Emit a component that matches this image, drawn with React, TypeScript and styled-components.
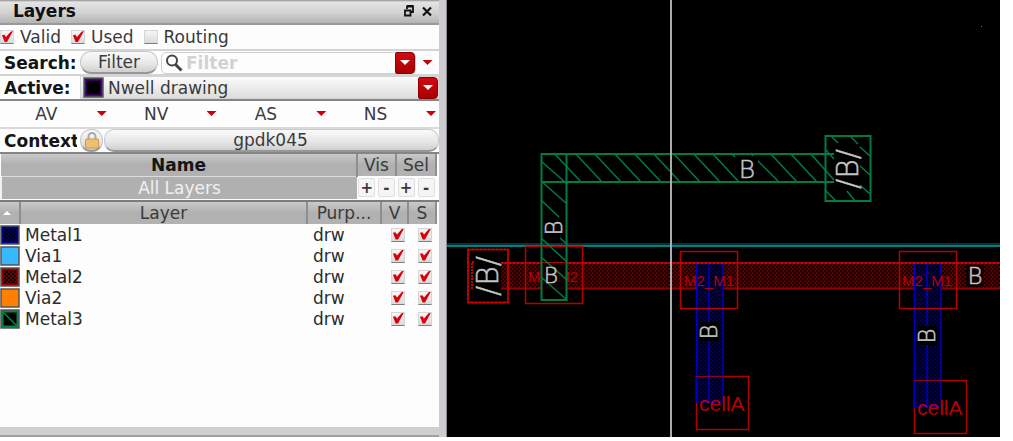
import React from 'react';
import styled, { createGlobalStyle, css } from 'styled-components';

const GlobalStyle = createGlobalStyle`
  * { box-sizing: border-box; }
  body {
    margin: 0;
    background: #fff;
    font-family: "DejaVu Sans", sans-serif;
    font-size: 17px;
    line-height: 20px;
    color: #3a3a3a;
  }
  button, input, select { font: inherit; color: inherit; margin: 0; }
`;

const Window = styled.div`
  display: grid;
  grid-template-columns: minmax(0, 439fr) 8px minmax(0, 553fr);
  padding-right: 13px;
`;

const Panel = styled.section`
  display: flex;
  flex-direction: column;
  min-width: 0;
  background: #fdfdfd;
`;

const Splitter = styled.div`
  background: #cdcdd1;
  border-right: 1px solid #8c8c90;
`;

const TitleBar = styled.header`
  display: flex;
  align-items: center;
  height: 25px;
  padding: 0 3px 2px 13px;
  background: linear-gradient(#8f8f8f 0, #e4e4e4 2px, #d2d2d2 55%, #b4b4b4 100%);
  border-bottom: 2px solid #999;
`;

const Title = styled.h1`
  flex: 1;
  margin: 0;
  font-size: 17px;
  line-height: 20px;
  color: #111;
`;

const TitleButton = styled.button`
  display: flex;
  width: 18px;
  padding: 2px;
  border: 0;
  background: none;
  color: #111;
`;

const Row = styled.div<{ $height: number; $dark?: boolean }>`
  display: flex;
  align-items: center;
  height: ${(p) => p.$height}px;
  border-bottom: 2px solid ${(p) => (p.$dark ? '#858585' : '#d4d4d4')};
`;

const CheckLabel = styled.label`
  display: flex;
  align-items: center;
  gap: 6px;
  margin-right: 10px;
`;

const CheckBox = styled.input.attrs({ type: 'checkbox' })`
  appearance: none;
  display: block;
  flex: none;
  width: 14px;
  height: 14px;
  background: linear-gradient(#f6f6f6, #dadada);
  border: 1px solid #d6d6d6;
  border-bottom-color: #7c7c7c;
  &:checked::after {
    content: '';
    display: block;
    width: 12px;
    height: 11px;
    background: #d8000c;
    clip-path: polygon(8% 38%, 28% 34%, 42% 54%, 80% 6%, 100% 0, 50% 100%, 30% 100%);
  }
`;

const RowLabel = styled.label`
  flex: none;
  width: 77px;
  padding-left: 4px;
  overflow: hidden;
  white-space: nowrap;
  font-weight: bold;
  color: #151515;
`;

const pill = css`
  border: 1px solid #c9c9c9;
  border-bottom: 2px solid #979797;
  background: linear-gradient(#fafafa, #e6e6e6 60%, #cfcfcf);
  padding: 0;
`;

const FilterButton = styled.button`
  ${pill}
  flex: none;
  width: 78px;
  height: 23px;
  margin-left: 3px;
  border-radius: 11px;
  line-height: 20px;
`;

const SearchField = styled.div`
  display: flex;
  align-items: center;
  flex: 1;
  min-width: 0;
  height: 22px;
  margin-left: 3px;
  padding-left: 2px;
  border: 1px solid #d0d0d0;
  border-radius: 5px;
`;

const SearchInput = styled.input`
  flex: 1;
  min-width: 0;
  padding: 0 0 0 2px;
  border: 0;
  outline: 0;
  background: transparent;
  height: 20px;
  &::placeholder { color: #d2d2d2; font-weight: bold; opacity: 1; }
`;

const DropButton = styled.button`
  display: flex;
  align-items: center;
  justify-content: center;
  flex: none;
  width: 20px;
  height: 22px;
  padding: 0;
  border: 1px solid #8c0000;
  border-radius: 2px 4px 4px 2px;
  background: linear-gradient(#d20a10, #a80006);
`;

const Arrow = styled.span<{ $light?: boolean }>`
  width: 10px;
  height: 5px;
  background: ${(p) => (p.$light ? '#fff' : '#c8000a')};
  clip-path: polygon(0 0, 100% 0, 50% 100%);
`;

const MenuButton = styled.button`
  display: flex;
  align-items: center;
  justify-content: center;
  flex: none;
  width: 23px;
  height: 20px;
  padding: 0;
  border: 0;
  background: none;
`;

const Combo = styled.div`
  display: flex;
  align-items: center;
  flex: 1;
  min-width: 0;
  height: 23px;
  margin-left: 3px;
  padding-left: 2px;
  border: 1px solid #d5d5d5;
  background: linear-gradient(#fbfbfb, #e9e9e9 60%, #dcdcdc);
`;

const ComboSelect = styled.select`
  appearance: none;
  flex: 1;
  min-width: 0;
  height: 21px;
  padding: 0 0 0 4px;
  border: 0;
  outline: 0;
  background: transparent;
`;

const Modes = styled.div`
  display: grid;
  grid-template-columns: repeat(4, 1fr);
  height: 28px;
  border-bottom: 2px solid #dadada;
`;

const ModeButton = styled.button`
  display: flex;
  align-items: center;
  padding: 0 3px 1px 0;
  border: 0;
  background: none;
  span:first-child { flex: 1; padding-right: 4px; }
`;

const LockButton = styled.button`
  ${pill}
  display: flex;
  align-items: center;
  justify-content: center;
  flex: none;
  width: 23px;
  height: 23px;
  margin-left: 3px;
  border-radius: 11px;
`;

const ContextButton = styled.button`
  ${pill}
  flex: 1;
  min-width: 0;
  height: 23px;
  margin-left: 1px;
  padding-right: 2px;
  border-radius: 10px;
`;

const Table = styled.table`
  width: calc(100% - 2px);
  table-layout: fixed;
  border-collapse: collapse;
  td, th { padding: 0; }
`;

const HeadCell = styled.th<{ $width?: number; $bold?: boolean }>`
  width: ${(p) => (p.$width ? `${p.$width}px` : 'auto')};
  height: 22px;
  font-weight: ${(p) => (p.$bold ? 'bold' : 'normal')};
  color: ${(p) => (p.$bold ? '#151515' : '#3a3a3a')};
  background: linear-gradient(#c9c9c9, #b0b0b0 50%, #b2b2b2);
  border-right: 2px solid #8e8e8e;
  white-space: nowrap;
  line-height: 20px;
`;

const AllCell = styled.td`
  height: 23px;
  background: #b0b0b0;
  border-left: 2px solid #f2f2f2;
  border-top: 1px solid #dcdcdc;
  color: #f1f1f1;
  text-align: center;
`;

const Steppers = styled.div`
  display: flex;
  justify-content: space-around;
`;

const StepButton = styled.button`
  width: 17px;
  height: 19px;
  padding: 0;
  border: 1px solid #e0e0e0;
  border-radius: 2px;
  background: #f5f5f5;
  font-weight: bold;
  font-size: 15px;
  line-height: 16px;
`;

const Divider = styled.div`
  height: 3px;
  border-top: 1px solid #fdfdfd;
  border-bottom: 2px solid #7c7c7c;
`;

const LayerRow = styled.tr`
  height: 21px;
  color: #2c2c2c;
`;

const Purpose = styled.td`
  && { padding-left: 6px; }
`;

const LayerName = styled.td`
  && { padding-left: 5px; }
`;

const CheckCell = styled.td`
  && { padding-left: 10px; }
`;

const SwatchSvg = styled.svg`
  display: block;
  flex: none;
`;

const StatusEdge = styled.footer`
  height: 10px;
  margin-top: auto;
  background: #cfcfcf;
  border-bottom: 2px solid #a0a0a0;
`;

const Layout = styled.svg`
  display: block;
  width: 100%;
  height: auto;
  background: #000;
`;

const WireText = styled.text`
  font-family: "DejaVu Sans Light", "DejaVu Sans", sans-serif;
  font-weight: 200;
  fill: #c4c4c4;
  stroke: #c4c4c4;
  stroke-width: 0.5px;
  text-anchor: middle;
`;

const CellText = styled.text`
  font-family: "Liberation Sans", sans-serif;
  fill: #b40008;
`;

type SwatchKind = 'nwell' | 'metal1' | 'via1' | 'metal2' | 'via2' | 'metal3';

const swatchColors: Record<SwatchKind, [string, string]> = {
  nwell: ['#4b0082', '#000'],
  metal1: ['#00008f', 'url(#sw-metal1)'],
  via1: ['#38b8ff', '#38b8ff'],
  metal2: ['#980000', 'url(#sw-metal2)'],
  via2: ['#ff8000', '#ff8000'],
  metal3: ['#00854a', '#000'],
};

function Swatch({ kind, size }: { kind: SwatchKind; size: number }) {
  const [edge, fill] = swatchColors[kind];
  return (
    <SwatchSvg width={size} height={size} viewBox="0 0 20 20" aria-hidden="true">
      <defs>
        <pattern id={`sw-${kind}`} width="4" height="4" patternUnits="userSpaceOnUse">
          <rect width="4" height="4" fill="#000" />
          <path d="M0 0h2v2h2v2h-2v-2h-2z" fill={edge} opacity="0.7" />
        </pattern>
      </defs>
      <rect x="1" y="1" width="18" height="18" fill={edge} stroke="#555" strokeWidth="1.500" />
      <rect x="3.500" y="3.500" width="13" height="13" fill={fill} />
      {kind === 'metal3' && <path d="M3 3L17 17" stroke="#00854a" strokeWidth="1.500" />}
    </SwatchSvg>
  );
}

const layers: { kind: SwatchKind; name: string }[] = [
  { kind: 'metal1', name: 'Metal1' },
  { kind: 'via1', name: 'Via1' },
  { kind: 'metal2', name: 'Metal2' },
  { kind: 'via2', name: 'Via2' },
  { kind: 'metal3', name: 'Metal3' },
];

const hatchTop = [554, 575, 594, 614, 634, 653, 673, 693, 712, 770, 790];
const hatchLeft = [161, 181, 257, 277];

function Via({ x, y, label, lx, ly }: { x: number; y: number; label: string; lx: number; ly: number }) {
  return (
    <g>
      <rect x={x} y={y} width="57" height="57" fill="none" stroke="#b80000" strokeWidth="1.500" />
      <CellText x={lx} y={ly} fontSize="15">{label}</CellText>
    </g>
  );
}

function Stub({ x, bottom, cellY }: { x: number; bottom: number; cellY: number }) {
  const mid = x + 13;
  return (
    <g>
      <rect x={x + 0.5} y={cellY + 0.5} width="52" height="53" fill="none" stroke="#b00000" strokeWidth="1.500" />
      <rect x={x} y="264" width="27" height={bottom - 264} fill="url(#m1)" />
      <path d={`M${x + 0.5} 264V${bottom}H${x + 27}V264M${mid} 264V${bottom}`} fill="none" stroke="#0000c0" strokeWidth="1.500" />
      <path d={`M${x} ${cellY + 0.5}h27`} stroke="#8c0028" />
      <CellText x={x + 3} y={cellY + 35} fontSize="21">cellA</CellText>
      <rect x={x + 3} y={cellY - 54} width="20" height="19" fill="#000" />
      <WireText transform={`translate(${x + 21} ${cellY - 44}) rotate(-90)`} fontSize="23">B</WireText>
    </g>
  );
}

function LayoutCanvas() {
  return (
    <Layout viewBox="447 0 553 437" role="img" aria-label="Layout view">
      <defs>
        <pattern id="m2" width="4" height="4" patternUnits="userSpaceOnUse">
          <rect width="4" height="4" fill="#180000" />
          <path d="M0 0h2v2h2v2h-2v-2h-2z" fill="#560000" />
        </pattern>
        <pattern id="m1" width="4" height="4" patternUnits="userSpaceOnUse">
          <rect width="4" height="4" fill="#000010" />
          <path d="M0 0h2v2h2v2h-2v-2h-2z" fill="#00004c" />
        </pattern>
      </defs>
      <rect x="447" y="243" width="553" height="2" fill="#003436" />
      <rect x="447" y="245" width="553" height="2" fill="#008084" />

      <rect x="501" y="263" width="499" height="26" fill="url(#m2)" />
      <path d="M501 263H1000" stroke="#a00000" strokeWidth="2" />
      <path d="M501 263H1000" stroke="#f01010" strokeWidth="1" strokeDasharray="2 2" />
      <path d="M501 288.500H1000" stroke="#900000" strokeWidth="2" />

      <rect x="468" y="249.500" width="40" height="53" fill="none" stroke="#a00000" strokeWidth="2" />
      <rect x="468" y="249.500" width="40" height="53" fill="none" stroke="#f00000" strokeWidth="1" strokeDasharray="2 2" />
      <path d="M474 262h-2v26h2" fill="none" stroke="#d00000" strokeWidth="2" strokeDasharray="2 1" />
      <WireText transform="translate(498 276) rotate(-90)" fontSize="30">/B/</WireText>

      <Via x={525.5} y={246.5} label="M1_M2" lx={528} ly={282} />

      <rect x="542" y="263" width="24" height="36" fill="#000" opacity="0.8" />
      <g fill="none" stroke="#007c42" strokeWidth="1.500">
        <path d="M834 154H541.500V300H566.500V154M541 182H834" strokeWidth="2" />
        {hatchTop.map((x) => <path key={x} d={`M${x} 153l27 29`} />)}
        {hatchLeft.map((y) => <path key={y} d={`M541 ${y}l26 23`} />)}
        <path d="M541 200l18 17M560 238l7 6M541 238l26 24M731 153l4 4M758 161l21 21M751 153l2 3M810 153l24 27" />
        <rect x="825.500" y="136" width="45" height="65" strokeWidth="2" />
        <path d="M831 136l7 7M850 136l8 8M860 147l10 9M860 166l10 9M860 185l10 9M847 191l8 10M825 190l11 11M826 150l8 9" />
      </g>

      <rect x="670" y="0" width="2" height="437" fill="#acacac" />
      <rect x="981" y="26" width="1" height="1" fill="#777" />

      <Stub x={696} bottom={402} cellY={376} />
      <Stub x={914} bottom={407} cellY={380} />
      <Via x={680.5} y={251.5} label="M2_M1" lx={684} ly={286} />
      <Via x={899.5} y={251.5} label="M2_M1" lx={902} ly={286} />

      <WireText x="747" y="178" fontSize="25">B</WireText>
      <WireText transform="translate(858 169) rotate(-90)" fontSize="30">/B/</WireText>
      <WireText transform="translate(562 228) rotate(-90)" fontSize="23">B</WireText>
      <WireText x="551" y="283" fontSize="22">B</WireText>
      <rect x="966" y="265" width="18" height="22" fill="#100000" />
      <WireText x="975" y="284" fontSize="23">B</WireText>
    </Layout>
  );
}

export default function App() {
  return (
    <Window>
      <GlobalStyle />
      <Panel>
        <TitleBar>
          <Title>Layers</Title>
          <TitleButton aria-label="Float panel">
            <svg width="14" height="14" viewBox="0 0 14 14" fill="none" stroke="currentColor">
              <path d="M5 5V2.500h6v5.500h-2M5 2h6.500" strokeWidth="1.800" />
              <path d="M3 6.500h5.500v5h-5.500zM2.500 6.500h6.500" strokeWidth="1.800" />
            </svg>
          </TitleButton>
          <TitleButton aria-label="Close panel">
            <svg width="14" height="14" viewBox="0 0 14 14" fill="none" stroke="currentColor" strokeWidth="2.200">
              <path d="M3 3.500l8 8M11 3.500l-8 8" />
            </svg>
          </TitleButton>
        </TitleBar>

        <Row $height={26}>
          <CheckLabel><CheckBox defaultChecked />Valid</CheckLabel>
          <CheckLabel><CheckBox defaultChecked />Used</CheckLabel>
          <CheckLabel><CheckBox />Routing</CheckLabel>
        </Row>

        <Row $height={25}>
          <RowLabel htmlFor="search">Search:</RowLabel>
          <FilterButton>Filter</FilterButton>
          <SearchField>
            <svg width="20" height="20" viewBox="0 0 20 20" fill="none" stroke="#444" aria-hidden="true">
              <circle cx="8" cy="7.500" r="5" strokeWidth="2" />
              <path d="M11.500 11.500l6 6" strokeWidth="3" />
            </svg>
            <SearchInput id="search" placeholder="Filter" />
            <DropButton aria-label="Search history"><Arrow $light /></DropButton>
          </SearchField>
          <MenuButton aria-label="Search options"><Arrow /></MenuButton>
        </Row>

        <Row $height={25} $dark>
          <RowLabel htmlFor="active">Active:</RowLabel>
          <Combo>
            <Swatch kind="nwell" size={21} />
            <ComboSelect id="active"><option>Nwell drawing</option></ComboSelect>
            <DropButton aria-label="Choose active layer"><Arrow $light /></DropButton>
          </Combo>
        </Row>

        <Modes>
          {['AV', 'NV', 'AS', 'NS'].map((m) => (
            <ModeButton key={m}><span>{m}</span><Arrow /></ModeButton>
          ))}
        </Modes>

        <Row $height={25} $dark>
          <RowLabel as="span">Context:</RowLabel>
          <LockButton aria-label="Lock context">
            <svg width="16" height="18" viewBox="0 0 16 18" fill="none">
              <path d="M4.500 9V5.500a3.500 3.500 0 0 1 7 0V9" stroke="#aaa" strokeWidth="2" />
              <rect x="1.500" y="8" width="13" height="9" rx="1" fill="#f0c070" stroke="#c99a50" />
            </svg>
          </LockButton>
          <ContextButton>gpdk045</ContextButton>
        </Row>

        <Table>
          <thead>
            <tr>
              <HeadCell $bold>Name</HeadCell>
              <HeadCell $width={39}>Vis</HeadCell>
              <HeadCell $width={40}>Sel</HeadCell>
            </tr>
          </thead>
          <tbody>
            <tr>
              <AllCell>All Layers</AllCell>
              {['visible', 'selectable'].map((what) => (
                <td key={what}>
                  <Steppers>
                    <StepButton aria-label={`All ${what}`}>+</StepButton>
                    <StepButton aria-label={`None ${what}`}>-</StepButton>
                  </Steppers>
                </td>
              ))}
            </tr>
          </tbody>
        </Table>
        <Divider />

        <Table>
          <thead>
            <tr>
              <HeadCell $width={20} aria-label="Sort">
                <SwatchSvg width="18" height="12" viewBox="0 0 18 12" aria-hidden="true">
                  <path d="M3 8l4-4 4 4z" fill="#fff" />
                </SwatchSvg>
              </HeadCell>
              <HeadCell>Layer</HeadCell>
              <HeadCell $width={74}>Purp...</HeadCell>
              <HeadCell $width={27}>V</HeadCell>
              <HeadCell $width={28}>S</HeadCell>
            </tr>
          </thead>
          <tbody>
            {layers.map(({ kind, name }) => (
              <LayerRow key={kind}>
                <td><Swatch kind={kind} size={20} /></td>
                <LayerName>{name}</LayerName>
                <Purpose>drw</Purpose>
                <CheckCell><CheckBox defaultChecked aria-label={`${name} visible`} /></CheckCell>
                <CheckCell><CheckBox defaultChecked aria-label={`${name} selectable`} /></CheckCell>
              </LayerRow>
            ))}
          </tbody>
        </Table>
        <StatusEdge />
      </Panel>
      <Splitter />
      <LayoutCanvas />
    </Window>
  );
}
